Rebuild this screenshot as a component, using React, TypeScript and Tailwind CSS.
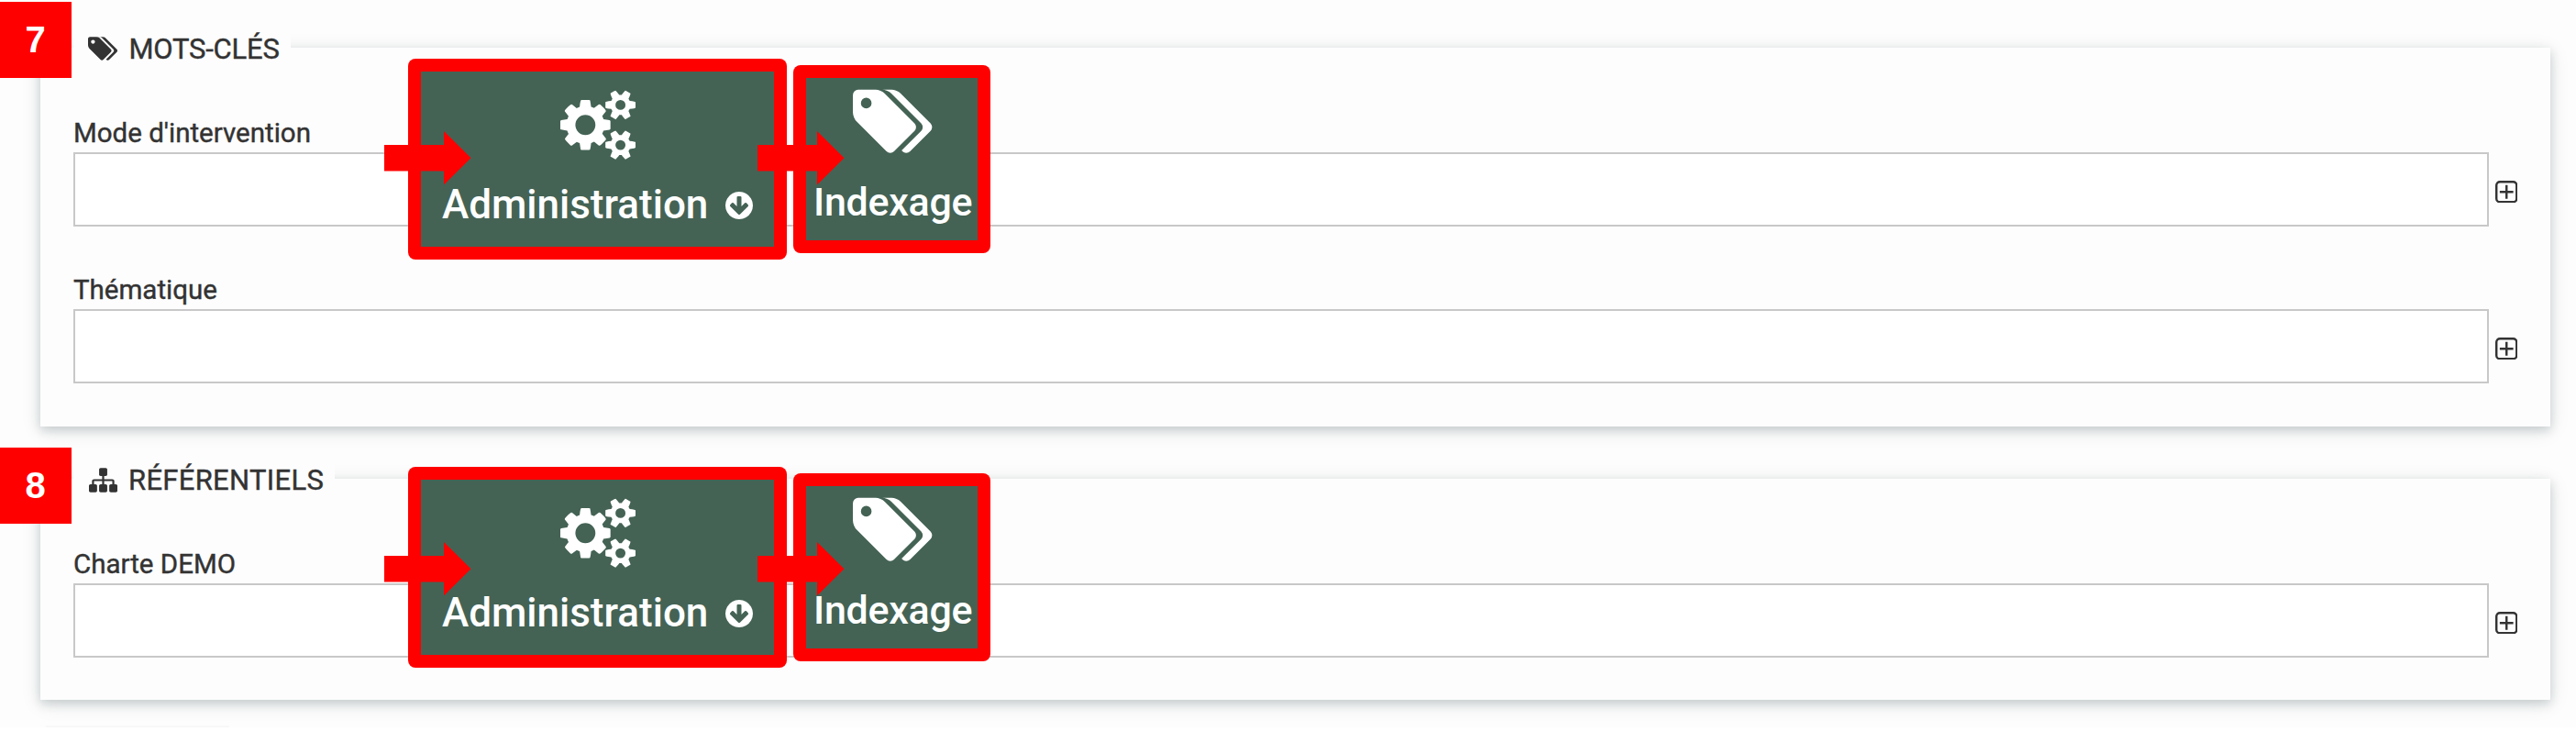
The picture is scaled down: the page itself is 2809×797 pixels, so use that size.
import type { ReactNode } from "react";

function TagsIcon({ className }: { className: string }) {
  return (
    <svg viewBox="0 0 1920 1792" className={className} fill="currentColor">
      <path d="M448 448q0-53-37.5-90.5t-90.5-37.5-90.5 37.5-37.5 90.5 37.5 90.5 90.5 37.5 90.5-37.5 37.5-90.5zm1067 576q0 53-37 90l-491 492q-39 37-91 37-53 0-90-37l-715-716q-38-37-64.5-101t-26.5-117v-416q0-52 38-90t90-38h416q53 0 117 26.5t102 64.5l715 714q37 39 37 91zm384 0q0 53-37 90l-491 492q-39 37-91 37-36 0-59-14t-53-45l470-470q37-37 37-90 0-52-37-91l-715-714q-38-38-102-64.5t-117-26.5h224q53 0 117 26.5t102 64.5l715 714q37 39 37 91z" />
    </svg>
  );
}

function CogsIcon({ className }: { className: string }) {
  return (
    <svg viewBox="0 0 1920 1792" className={className} fill="currentColor">
      <path d="M896 896q0-106-75-181t-181-75-181 75-75 181 75 181 181 75 181-75 75-181zm768 512q0-52-38-90t-90-38-90 38-38 90q0 53 37.5 90.5t90.5 37.5 90.5-37.5 37.5-90.5zm0-1024q0-52-38-90t-90-38-90 38-38 90q0 53 37.5 90.5t90.5 37.5 90.5-37.5 37.5-90.5zm-384 421v185q0 10-7 19.5t-16 10.5l-155 24q-11 35-32 76 34 48 90 115 7 11 7 20 0 12-7 19-23 30-82.5 89.5t-78.5 59.5q-11 0-21-7l-115-90q-37 19-77 31-11 108-23 155-7 24-30 24h-186q-11 0-20-7.5t-10-17.5l-23-153q-34-10-75-31l-118 89q-7 7-20 7-11 0-21-8-144-133-144-160 0-9 7-19 10-14 41-53t47-61q-23-44-35-82l-152-24q-10-1-17-9.5t-7-19.5v-185q0-10 7-19.5t16-10.5l155-24q11-35 32-76-34-48-90-115-7-11-7-20 0-12 7-20 22-30 82-89t79-59q11 0 21 7l115 90q34-18 77-32 11-108 23-154 7-24 30-24h186q11 0 20 7.5t10 17.5l23 153q34 10 75 31l118-89q8-7 20-7 11 0 21 8 144 133 144 160 0 8-7 19-12 16-42 54t-45 60q23 48 34 82l152 23q10 2 17 10.5t7 19.5zm640 533v140q0 16-149 31-12 27-30 52 51 113 51 138 0 4-4 7-122 71-124 71-8 0-46-47t-52-68q-20 2-30 2t-30-2q-14 21-52 68t-46 47q-2 0-124-71-4-3-4-7 0-25 51-138-18-25-30-52-149-15-149-31v-140q0-16 149-31 13-29 30-52-51-113-51-138 0-4 4-7 4-2 35-20t59-34 30-16q8 0 46 46.5t52 67.5q20-2 30-2t30 2q51-71 92-112l6-2q4 0 124 70 4 3 4 7 0 25-51 138 17 23 30 52 149 15 149 31zm0-1024v140q0 16-149 31-12 27-30 52 51 113 51 138 0 4-4 7-122 71-124 71-8 0-46-47t-52-68q-20 2-30 2t-30-2q-14 21-52 68t-46 47q-2 0-124-71-4-3-4-7 0-25 51-138-18-25-30-52-149-15-149-31v-140q0-16 149-31 13-29 30-52-51-113-51-138 0-4 4-7 4-2 35-20t59-34 30-16q8 0 46 46.5t52 67.5q20-2 30-2t30 2q51-71 92-112l6-2q4 0 124 70 4 3 4 7 0 25-51 138 17 23 30 52 149 15 149 31z" />
    </svg>
  );
}

function SitemapIcon({ className }: { className: string }) {
  return (
    <svg viewBox="0 0 1792 1792" className={className} fill="currentColor">
      <path d="M1792 1248v320q0 40-28 68t-68 28h-320q-40 0-68-28t-28-68v-320q0-40 28-68t68-28h96v-192h-512v192h96q40 0 68 28t28 68v320q0 40-28 68t-68 28h-320q-40 0-68-28t-28-68v-320q0-40 28-68t68-28h96v-192h-512v192h96q40 0 68 28t28 68v320q0 40-28 68t-68 28h-320q-40 0-68-28t-28-68v-320q0-40 28-68t68-28h96v-192q0-52 38-90t90-38h512v-192h-96q-40 0-68-28t-28-68v-320q0-40 28-68t68-28h320q40 0 68 28t28 68v320q0 40-28 68t-68 28h-96v192h512q52 0 90 38t38 90v192h96q40 0 68 28t28 68z" />
    </svg>
  );
}

function ArrowCircleDownIcon({ className }: { className: string }) {
  return (
    <svg viewBox="128 128 1536 1536" className={className} fill="currentColor">
      <path d="M1412 897q0-27-18-45l-91-91q-18-18-45-18t-45 18l-189 189v-502q0-26-19-45t-45-19h-128q-26 0-45 19t-19 45v502l-189-189q-19-19-45-19t-45 19l-91 91q-18 18-18 45t18 45l362 362 91 91q18 18 45 18t45-18l91-91 362-362q18-18 18-45zm252-1q0 209-103 385.5t-279.5 279.5-385.5 103-385.5-103-279.5-279.5-103-385.5 103-385.5 279.5-279.5 385.5-103 385.5 103 279.5 279.5 103 385.5z" />
    </svg>
  );
}

function PlusSquareIcon({ className }: { className: string }) {
  return (
    <svg viewBox="0 0 1408 1408" className={className} fill="none" stroke="currentColor" strokeWidth="140">
      <rect x="70" y="70" width="1268" height="1268" rx="220" />
      <path d="M280 704h848M704 280v848" />
    </svg>
  );
}

function Field({ label }: { label: string }) {
  return (
    <div>
      <label className="block h-9 text-[29.5px] leading-9 [-webkit-text-stroke:0.4px_#333333]">{label}</label>
      <div className="mt-[3px] flex items-center">
        <input className="h-[81px] w-[2634px] border-2 border-[#c8c8c8] bg-white" />
        <PlusSquareIcon className="mt-[5px] ml-[7px] h-[24.5px] w-[24.5px]" />
      </div>
    </div>
  );
}

function Panel({
  icon,
  title,
  className,
  titleClass,
  children,
}: {
  icon: ReactNode;
  title: string;
  className: string;
  titleClass: string;
  children: ReactNode;
}) {
  return (
    <section
      className={`mr-7 ml-11 bg-[#fdfdfd] px-9 shadow-[0_4px_10px_rgba(20,45,50,0.16),0_4px_20px_rgba(20,45,50,0.12)] ${className}`}
    >
      <h2
        className={`-mt-[21px] mb-[50px] flex h-[46px] items-center bg-[#fdfdfd] pl-4 text-[31px] leading-[46px] [-webkit-text-stroke:0.4px_#333333] ${titleClass}`}
      >
        {icon}
        {title}
      </h2>
      <div className="flex flex-col gap-[51px]">{children}</div>
    </section>
  );
}

function Arrow({ className }: { className: string }) {
  return (
    <svg viewBox="0 0 94.5 58.5" className={className} fill="#ff0000">
      <path d="M0 15H65V0L94.5 29.25L65 58.5V43.5H0Z" />
    </svg>
  );
}

function MenuPath({ className, arrows }: { className: string; arrows: string }) {
  return (
    <div className={`absolute left-[419px] h-[219px] w-[661px] text-white ${className}`}>
      <div className="flex items-start gap-[7px] pl-[26px]">
        <div className="h-[219px] w-[413px] rounded-lg bg-[#ff0000] p-3.5">
          <div className="flex h-full flex-col bg-[#446355] pt-5">
            <CogsIcon className="ml-[151.5px] h-[76.5px] w-[82px]" />
            <div className="mt-[22px] ml-[23px] flex h-[52px] items-center text-[44px] leading-[52px] font-medium">
              <span className="w-[308.5px]">Administration</span>
              <ArrowCircleDownIcon className="mt-[3px] h-[30px] w-[30px]" />
            </div>
          </div>
        </div>
        <div className="mt-[7px] h-[205px] w-[215px] rounded-lg bg-[#ff0000] p-3.5">
          <div className="flex h-full flex-col bg-[#446355] pt-[7px]">
            <TagsIcon className="ml-[51px] h-[81.5px] w-[87.4px]" />
            <div className="mt-5 ml-2 h-[52px] text-[43px] leading-[52px] font-medium tracking-[-0.3px]">
              Indexage
            </div>
          </div>
        </div>
      </div>
      <Arrow className={`absolute left-0 h-[58.5px] w-[94.5px] ${arrows}`} />
      <Arrow className={`absolute left-[407px] h-[58.5px] w-[94.5px] ${arrows}`} />
    </div>
  );
}

function Badge({ className, children }: { className: string; children: ReactNode }) {
  return (
    <div
      className={`absolute left-0 flex h-[83px] w-[78px] justify-center bg-[#ff0000] pr-px font-['Liberation_Sans',sans-serif] text-[40px] leading-[82px] font-bold text-white ${className}`}
    >
      {children}
    </div>
  );
}

export default function App() {
  return (
    <main className="relative flex h-[797px] w-[2809px] flex-col gap-[57px] overflow-hidden bg-[#fdfdfd] pt-[52px] font-[Roboto,sans-serif] text-[#333333]">
      <Panel
        icon={<TagsIcon className="-mt-0.5 mr-3 h-[30.2px] w-[32.4px]" />}
        title="MOTS-CLÉS"
        className="pb-[47px]"
        titleClass="w-[237px] tracking-[-0.2px]"
      >
        <Field label="Mode d'intervention" />
        <Field label="Thématique" />
      </Panel>
      <Panel
        icon={<SitemapIcon className="-mt-0.5 mr-3 ml-px h-[31px] w-[31px]" />}
        title="RÉFÉRENTIELS"
        className="pb-[46px]"
        titleClass="w-[285px] tracking-[0.3px]"
      >
        <Field label="Charte DEMO" />
      </Panel>
      <div className="absolute bottom-1 left-[50px] h-[3px] w-[200px] bg-linear-to-b from-transparent to-black/3" />
      <div className="absolute bottom-0 left-0 h-1 w-full bg-white" />

      <Badge className="top-[2px]">7</Badge>
      <Badge className="top-[488px]">8</Badge>
      <MenuPath className="top-[64px]" arrows="top-[79px]" />
      <MenuPath className="top-[509px]" arrows="top-[81.5px]" />
    </main>
  );
}
